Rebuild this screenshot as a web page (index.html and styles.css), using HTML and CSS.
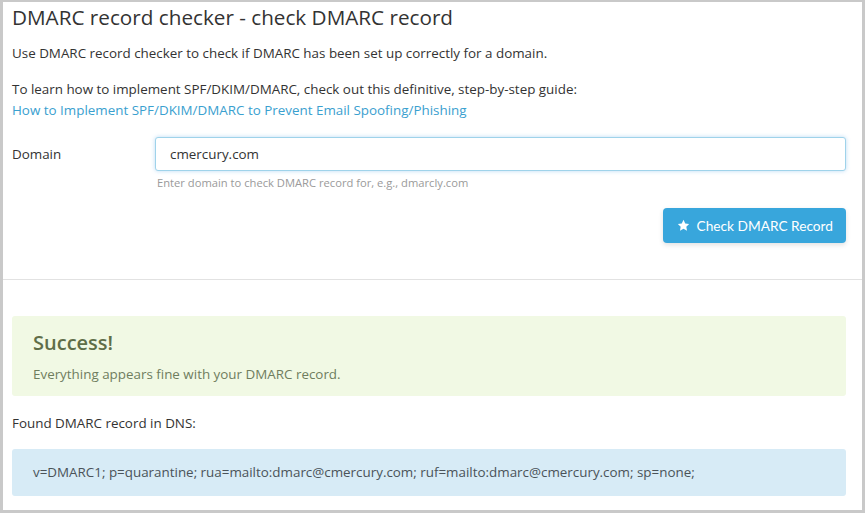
FILE: index.html
```html
<!DOCTYPE html>
<html lang="en">
<head>
    <meta charset="UTF-8">
    <meta name="viewport" content="width=device-width, initial-scale=1.0">
    <title>DMARC record checker</title>
    <link rel="stylesheet" href="styles.css">
</head>
<body>
    <div class="frame">
        <section class="checker">
            <h1>DMARC record checker - check DMARC record</h1>
            <p class="intro">Use DMARC record checker to check if DMARC has been set up correctly for a domain.</p>
            <p class="guide">
                To learn how to implement SPF/DKIM/DMARC, check out this definitive, step-by-step guide:<br>
                <a href="#">How to Implement SPF/DKIM/DMARC to Prevent Email Spoofing/Phishing</a>
            </p>

            <div class="form-row">
                <label for="domain">Domain</label>
                <div class="field">
                    <input type="text" id="domain" value="cmercury.com">
                    <span class="help">Enter domain to check DMARC record for, e.g., dmarcly.com</span>
                </div>
            </div>

            <div class="actions">
                <button class="button">
                    <svg width="13" height="13" viewBox="0 0 24 24"><path fill="#fff" d="M12 1.6l3.2 6.6 7.2 1-5.2 5.1 1.3 7.2L12 18.1l-6.5 3.4 1.3-7.2L1.6 9.2l7.2-1z"/></svg>
                    Check DMARC Record
                </button>
            </div>
        </section>

        <hr class="divider">

        <section class="result">
            <div class="alert success">
                <h2>Success!</h2>
                <p>Everything appears fine with your DMARC record.</p>
            </div>
            <p class="found">Found DMARC record in DNS:</p>
            <div class="alert info">v=DMARC1; p=quarantine; rua=mailto:dmarc@cmercury.com; ruf=mailto:dmarc@cmercury.com; sp=none;</div>
        </section>
    </div>
</body>
</html>
```

FILE: styles.css
```css
body {
    margin: 0;
    font-family: "Open Sans", sans-serif;
    color: #333;
    background-color: #fff;
}

.frame {
    box-sizing: border-box;
    height: 513px;
    border: 3px solid #c9c9c9;
    border-top-width: 2px;
    overflow: hidden;
}

.checker {
    padding: 0 16px 0 9px;
}

h1 {
    font-size: 20.7px;
    font-weight: 400;
    color: #333;
    margin: 0;
    line-height: 30px;
}

.intro,
.guide {
    font-size: 13.4px;
    line-height: 21px;
    margin: 0;
}

.intro {
    margin-top: 11px;
}

.guide {
    margin-top: 15px;
}

.guide a {
    color: #3aa0cf;
    text-decoration: none;
}

.form-row {
    display: flex;
    margin-top: 16px;
}

.form-row label {
    width: 143px;
    font-size: 13.4px;
    line-height: 34px;
}

.field {
    flex: 1;
}

.field input {
    box-sizing: border-box;
    width: 100%;
    height: 34px;
    padding: 0 14px;
    font-family: "Open Sans", sans-serif;
    font-size: 13.4px;
    color: #333;
    border: 1px solid #9fd3ea;
    border-radius: 3px;
    box-shadow: 0 0 4px rgba(102, 175, 233, 0.45);
    outline: none;
}

.help {
    display: block;
    margin: 4px 0 0 2px;
    font-size: 11.2px;
    line-height: 16px;
    color: #9a9a9a;
}

.actions {
    display: flex;
    justify-content: flex-end;
    margin-top: 17px;
}

.button {
    display: flex;
    align-items: center;
    gap: 7px;
    height: 35px;
    padding: 0 13px 0 14px;
    background-color: #38a6dc;
    color: #fff;
    font-family: Lato, sans-serif;
    font-size: 13.7px;
    border: none;
    border-radius: 4px;
    box-shadow: 0 2px 5px rgba(0, 0, 0, 0.12);
    cursor: pointer;
}

.divider {
    border: none;
    border-top: 1px solid #e2e2e2;
    margin: 36px 0 0;
}

.result {
    padding: 36px 16px 0 9px;
}

.alert {
    border-radius: 3px;
    padding: 0 21px;
}

.success {
    background-color: #f1f9e4;
    height: 80px;
    box-sizing: border-box;
    padding-top: 14px;
}

.success h2 {
    margin: 0;
    font-size: 20px;
    font-weight: 600;
    line-height: 26px;
    color: #5f6e48;
}

.success p {
    margin: 9px 0 0;
    font-size: 13.4px;
    line-height: 18px;
    color: #6f7d5e;
}

.found {
    font-size: 13.4px;
    line-height: 18px;
    margin: 18px 0 0;
}

.info {
    margin-top: 17px;
    background-color: #d7ebf6;
    font-size: 13.4px;
    line-height: 47px;
    color: #4a5359;
}
```
